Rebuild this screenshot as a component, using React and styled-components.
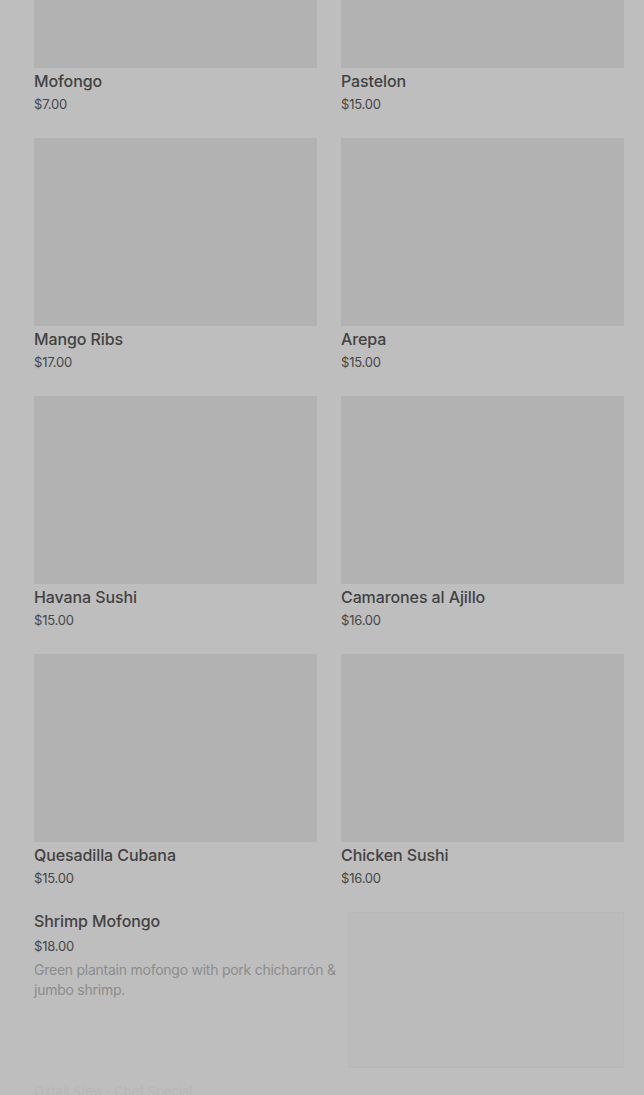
import styled, { createGlobalStyle } from "styled-components";

const GlobalStyle = createGlobalStyle`
  html, body {
    margin: 0;
    padding: 0;
    background: #bebebe;
    height: 1095px;
    overflow: hidden;
  }
  * {
    box-sizing: border-box;
  }
`;

const Page = styled.div`
  width: 644px;
  height: 1095px;
  overflow: hidden;
  background: #bebebe;
  font-family: Inter, "Liberation Sans", sans-serif;
`;

const Menu = styled.div`
  margin-top: -120px;
  padding: 0 20px 0 34px;
`;

const Grid = styled.div`
  display: grid;
  grid-template-columns: 283px 283px;
  column-gap: 24px;
  row-gap: 25px;
`;

const Card = styled.div`
  display: flex;
  flex-direction: column;
`;

const Thumb = styled.div`
  width: 100%;
  height: 188px;
  background: #b2b2b2;
`;

const Name = styled.div`
  margin-top: ${(p) => p.$top ?? 3}px;
  font-size: 16px;
  line-height: 20px;
  font-weight: 500;
  color: #424242;
  letter-spacing: -0.1px;
`;

const Price = styled.div`
  margin-top: ${(p) => p.$top ?? 4}px;
  font-size: 13px;
  line-height: 18px;
  color: #474747;
  letter-spacing: -0.2px;
`;

const Featured = styled.div`
  display: flex;
  gap: 10px;
  margin-top: 25px;
`;

const Info = styled.div`
  flex: 1;
`;

const Desc = styled.div`
  margin-top: 5px;
  font-size: 14px;
  line-height: 20px;
  color: #8c8c8c;
  letter-spacing: -0.25px;
`;

const FeaturedThumb = styled.div`
  width: 276px;
  height: 156px;
  flex-shrink: 0;
  background: #bbbbbb;
  border: 1px solid #b8b8b8;
`;

const Faded = styled.div`
  margin-top: 14px;
  font-size: 13px;
  line-height: 18px;
  color: #b6b6b6;
`;

const items = [
  { name: "Mofongo", price: "$7.00" },
  { name: "Pastelon", price: "$15.00" },
  { name: "Mango Ribs", price: "$17.00" },
  { name: "Arepa", price: "$15.00" },
  { name: "Havana Sushi", price: "$15.00" },
  { name: "Camarones al Ajillo", price: "$16.00" },
  { name: "Quesadilla Cubana", price: "$15.00" },
  { name: "Chicken Sushi", price: "$16.00" },
];

export default function App() {
  return (
    <Page>
      <GlobalStyle />
      <Menu>
        <Grid>
          {items.map((item) => (
            <Card key={item.name}>
              <Thumb />
              <Name>{item.name}</Name>
              <Price>{item.price}</Price>
            </Card>
          ))}
        </Grid>
        <Featured>
          <Info>
            <Name $top={-1}>Shrimp Mofongo</Name>
            <Price $top={6}>$18.00</Price>
            <Desc>Green plantain mofongo with pork chicharrón &amp; jumbo shrimp.</Desc>
          </Info>
          <FeaturedThumb />
        </Featured>
        <Faded>Oxtail Stew · Chef Special</Faded>
      </Menu>
    </Page>
  );
}
